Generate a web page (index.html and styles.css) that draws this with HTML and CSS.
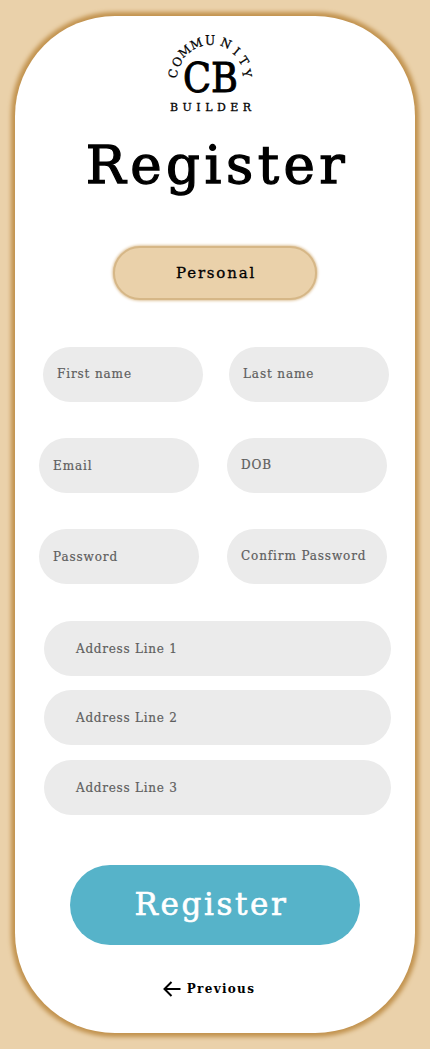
FILE: index.html
```html
<!DOCTYPE html>
<html lang="en">
<head>
<meta charset="utf-8">
<title>Community Builder - Register</title>
<link rel="stylesheet" href="styles.css">
</head>
<body>
<main class="card">
  <svg class="logo" width="90" height="80" viewBox="165 33 90 80" role="img" aria-label="Community Builder">
    <g class="logo-arc">
      <text transform="translate(173.3 73.5) rotate(-80)" y="4">C</text>
      <text transform="translate(177.5 62) rotate(-58)" y="4">O</text>
      <text transform="translate(185 51.5) rotate(-40)" y="4">M</text>
      <text transform="translate(196.5 44) rotate(-22)" y="4">M</text>
      <text transform="translate(210 40.5)" y="4">U</text>
      <text transform="translate(226 43.5) rotate(24)" y="4">N</text>
      <text transform="translate(236.5 51.5) rotate(40)" y="4">I</text>
      <text transform="translate(243.5 61) rotate(57)" y="4">T</text>
      <text transform="translate(246.5 73.5) rotate(77)" y="4">Y</text>
    </g>
    <text class="logo-mark" x="183" y="91.5" textLength="55" lengthAdjust="spacingAndGlyphs">CB</text>
    <text class="logo-base" x="170" y="110.5" textLength="81">BUILDER</text>
  </svg>
  <h1 class="title">Register</h1>
  <div class="badge">Personal</div>
  <form class="form">
    <div class="pair pair-names">
      <label class="field">First name</label>
      <label class="field">Last name</label>
    </div>
    <div class="pair">
      <label class="field field-low">Email</label>
      <label class="field">DOB</label>
    </div>
    <div class="pair">
      <label class="field field-low">Password</label>
      <label class="field">Confirm Password</label>
    </div>
    <div class="address">
      <label class="field wide">Address Line 1</label>
      <label class="field wide">Address Line 2</label>
      <label class="field wide">Address Line 3</label>
    </div>
    <button class="submit" type="button">Register</button>
  </form>
  <a class="previous">
    <svg width="18" height="16" viewBox="0 0 18 16" fill="none" stroke="#000" stroke-width="2"><path d="M17.5 8H2M8.5 1L1.5 8l7 7"/></svg>
    <span>Previous</span>
  </a>
</main>
</body>
</html>
```
FILE: styles.css
```css
* { box-sizing: border-box; }
body {
  margin: 0;
  height: 1049px;
  padding: 16px 15px;
  background: #ead1aa;
  font-family: "DejaVu Serif", serif;
  color: #000;
}
.card {
  height: 1017px;
  padding-top: 17px;
  display: flex;
  flex-direction: column;
  align-items: center;
  background: #fff;
  border-radius: 100px;
  box-shadow: 0 0 4px 3.5px #c2934f;
}
.logo { flex: none; margin-right: 10px; }
.logo-arc { font-size: 12px; text-anchor: middle; stroke: #000; stroke-width: 0.25px; }
.logo-mark { font-size: 41px; stroke: #000; stroke-width: 1px; }
.logo-base { font-size: 11px; stroke: #000; stroke-width: 0.3px; }
.title {
  margin: 10px 0 0;
  height: 90px;
  line-height: 83px;
  font-size: 53px;
  font-weight: 400;
  letter-spacing: 4.5px;
  padding-left: 5px;
  -webkit-text-stroke: 1.3px #000;
}
.badge {
  width: 204px;
  height: 54px;
  margin-top: 33px;
  border: 2px solid #d6b787;
  border-radius: 27px;
  background: #ead1aa;
  box-shadow: 0 0 3px 0.5px #d6b482;
  font-size: 15px;
  line-height: 50px;
  letter-spacing: 1.8px;
  text-align: center;
  padding-left: 2px;
  -webkit-text-stroke: 0.3px #000;
}
.form { width: 400px; padding-top: 47px; }
.pair {
  display: flex;
  gap: 28px;
  margin: 0 0 36px 24px;
}
.pair-names { gap: 26px; margin-left: 28px; }
.field {
  width: 160px;
  height: 55px;
  padding-left: 14px;
  border-radius: 27.5px;
  background: #ebebeb;
  color: #5e5e5e;
  font-size: 12px;
  line-height: 54px;
  letter-spacing: 0.88px;
  white-space: nowrap;
  -webkit-text-stroke: 0.2px #5e5e5e;
}
.field-low { line-height: 56px; }
.address {
  display: grid;
  gap: 14.4px;
  margin: 37px 0 0 29px;
}
.wide { width: 347px; padding-left: 32px; line-height: 56px; letter-spacing: 0.75px; }
.submit {
  display: block;
  width: 290px;
  height: 80px;
  margin: 50px 0 0 55px;
  padding: 0 7px 2px 0;
  border: 0;
  border-radius: 40px;
  background: #56b3c9;
  color: #fff;
  font: inherit;
  font-size: 31px;
  letter-spacing: 2.6px;
  -webkit-text-stroke: 0.6px #fff;
}
.previous {
  display: flex;
  align-items: center;
  gap: 6px;
  height: 18px;
  margin: 35px 12px 0 0;
  font-size: 12px;
  font-weight: 700;
  letter-spacing: 1.3px;
}
```
